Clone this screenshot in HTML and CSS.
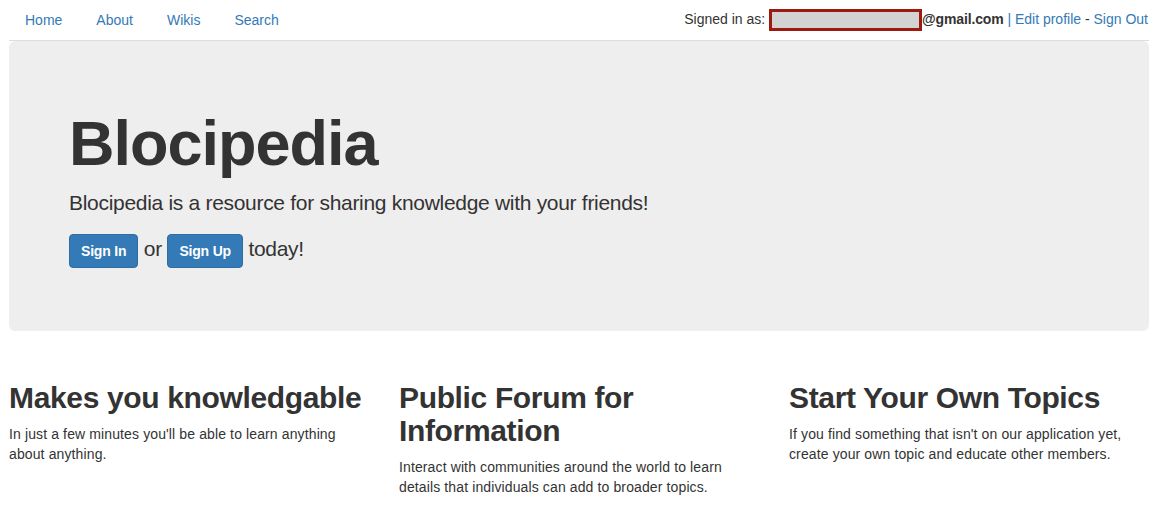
FILE: index.html
```html
<!DOCTYPE html>
<html>
<head>
<meta charset="utf-8">
<link rel="stylesheet" href="styles.css">
</head>
<body>
<div class="page">
  <nav class="topnav">
    <ul class="nav-links">
      <li><a href="#">Home</a></li>
      <li><a href="#">About</a></li>
      <li><a href="#">Wikis</a></li>
      <li><a href="#">Search</a></li>
    </ul>
    <div class="user-info">Signed in as: <span class="redacted"></span><strong>@gmail.com</strong> <span class="sep">|</span> <a href="#">Edit profile</a> - <a href="#">Sign Out</a></div>
  </nav>
  <section class="jumbotron">
    <h1>Blocipedia</h1>
    <p class="lead">Blocipedia is a resource for sharing knowledge with your friends!</p>
    <p class="lead actions"><a class="btn" href="#">Sign In</a> or <a class="btn" href="#">Sign Up</a> today!</p>
  </section>
  <div class="features">
    <div class="feature">
      <h2>Makes you knowledgable</h2>
      <p>In just a few minutes you'll be able to learn anything about anything.</p>
    </div>
    <div class="feature">
      <h2>Public Forum for Information</h2>
      <p>Interact with communities around the world to learn details that individuals can add to broader topics.</p>
    </div>
    <div class="feature">
      <h2>Start Your Own Topics</h2>
      <p>If you find something that isn't on our application yet, create your own topic and educate other members.</p>
    </div>
  </div>
</div>
</body>
</html>
```
FILE: styles.css
```css
* { box-sizing: border-box; }
html, body { margin: 0; padding: 0; background: #fff; }
body {
  font-family: "Liberation Sans", Arial, Helvetica, sans-serif;
  font-size: 14px;
  line-height: 20px;
  color: #333;
}
a { color: #337ab7; text-decoration: none; }
.page { padding: 0 9px; }
.topnav {
  display: flex;
  justify-content: space-between;
  align-items: center;
  height: 41px;
  border-bottom: 1px solid #ddd;
}
.nav-links {
  list-style: none;
  margin: 0;
  padding: 0 0 0 16px;
  display: flex;
  gap: 34px;
}
.user-info {
  white-space: nowrap;
  padding-right: 1px;
}
.user-info strong { letter-spacing: -0.15px; }
.redacted {
  display: inline-block;
  vertical-align: middle;
  width: 153px;
  height: 22px;
  margin-top: -2px;
  background: #d3d3d3;
  border: 3px solid #9c1a0f;
}
.sep { color: #337ab7; }
.jumbotron {
  background: #eee;
  border-radius: 6px;
  padding: 48px 60px;
  margin-bottom: 30px;
}
.jumbotron h1 {
  font-size: 63px;
  line-height: 69px;
  font-weight: bold;
  margin: 20px 0 10px;
  letter-spacing: -1px;
}
.lead {
  font-size: 21px;
  line-height: 30px;
  font-weight: 300;
  margin: 0 0 15px;
  letter-spacing: -0.3px;
}
.actions .btn {
  display: inline-block;
  vertical-align: middle;
  margin-top: 1px;
  background: #337ab7;
  border: 1px solid #2e6da4;
  color: #fff;
  font-size: 14px;
  font-weight: bold;
  line-height: 20px;
  padding: 6px 11px;
  border-radius: 4px;
  letter-spacing: -0.2px;
}
.features {
  display: grid;
  grid-template-columns: 360px 360px 360px;
  gap: 30px;
}
.feature h2 {
  font-size: 30px;
  line-height: 33px;
  font-weight: bold;
  margin: 20px 0 10px;
  letter-spacing: -0.35px;
}
.feature p { margin: 0 0 10px; letter-spacing: 0.12px; }
```
